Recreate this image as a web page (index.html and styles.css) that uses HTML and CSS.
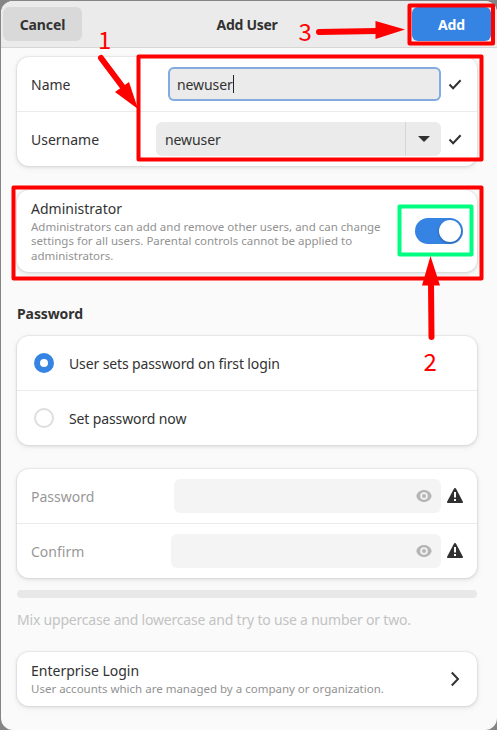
FILE: index.html
```
<!DOCTYPE html>
<html lang="en">
<head>
    <meta charset="utf-8">
    <title>Add User</title>
    <link rel="stylesheet" href="styles.css">
</head>
<body>
    <div class="dialog">
        <header class="header">
            <button class="btn cancel">Cancel</button>
            <span class="title">Add User</span>
            <button class="btn add">Add</button>
        </header>

        <main class="content">
            <section class="card">
                <div class="row">
                    <span class="label">Name</span>
                    <div class="entry name-entry focused"><span>newuser</span><i class="caret"></i></div>
                    <svg class="icon" viewBox="0 0 16 16"><path class="check" d="M2.500 8.500l3.600 3.700 7.500-8"/></svg>
                </div>
                <div class="row">
                    <span class="label">Username</span>
                    <div class="entry user-entry">
                        <span>newuser</span>
                        <span class="drop"><svg class="arrow" viewBox="0 0 12 6"><path d="M0 0h12L6 6z"/></svg></span>
                    </div>
                    <svg class="icon" viewBox="0 0 16 16"><path class="check" d="M2.500 8.500l3.600 3.700 7.500-8"/></svg>
                </div>
            </section>

            <section class="card admin">
                <div class="text">
                    <div class="name">Administrator</div>
                    <div class="desc">
                        <span class="line">Administrators can add and remove other users, and can change</span>
                        <span class="line">settings for all users. Parental controls cannot be applied to</span>
                        <span class="line">administrators.</span>
                    </div>
                </div>
                <div class="switch"><i class="knob"></i></div>
            </section>

            <h2 class="heading">Password</h2>

            <section class="card">
                <div class="row">
                    <i class="radio checked"></i>
                    <span class="option">User sets password on first login</span>
                </div>
                <div class="row">
                    <i class="radio"></i>
                    <span class="option">Set password now</span>
                </div>
            </section>

            <section class="card passwords">
                <div class="row">
                    <span class="label">Password</span>
                    <div class="entry pass-entry disabled">
                        <svg class="icon eye" viewBox="0 0 16 16"><path fill-rule="evenodd" d="M8 2C4 2 1.2 4.400.3 8c.9 3.600 3.700 6 7.700 6s6.800-2.400 7.700-6C14.800 4.400 12 2 8 2zm0 2.200a3.800 3.800 0 1 1 0 7.600 3.800 3.800 0 0 1 0-7.600z"/><circle cx="8" cy="8" r="2"/></svg>
                    </div>
                    <svg class="icon warn" viewBox="0 0 16 16"><path fill-rule="evenodd" d="M8 0c-.5 0-.9.2-1.100.7L.2 13.600c-.4.800.1 1.400.9 1.400h13.800c.8 0 1.300-.6.900-1.400L9.100.7C8.900.2 8.500 0 8 0zM7 4h2v5.500H7zM7 11h2v2H7z"/></svg>
                </div>
                <div class="row">
                    <span class="label">Confirm</span>
                    <div class="entry confirm-entry disabled">
                        <svg class="icon eye" viewBox="0 0 16 16"><path fill-rule="evenodd" d="M8 2C4 2 1.2 4.400.3 8c.9 3.600 3.700 6 7.700 6s6.800-2.400 7.700-6C14.800 4.400 12 2 8 2zm0 2.200a3.800 3.800 0 1 1 0 7.600 3.800 3.800 0 0 1 0-7.600z"/><circle cx="8" cy="8" r="2"/></svg>
                    </div>
                    <svg class="icon warn" viewBox="0 0 16 16"><path fill-rule="evenodd" d="M8 0c-.5 0-.9.2-1.100.7L.2 13.600c-.4.800.1 1.400.9 1.400h13.800c.8 0 1.300-.6.900-1.400L9.100.7C8.900.2 8.500 0 8 0zM7 4h2v5.500H7zM7 11h2v2H7z"/></svg>
                </div>
            </section>

            <div class="level"></div>
            <p class="hint">Mix uppercase and lowercase and try to use a number or two.</p>

            <section class="card login">
                <div class="text">
                    <div class="name">Enterprise Login</div>
                    <div class="desc"><span class="line">User accounts which are managed by a company or organization.</span></div>
                </div>
                <svg class="icon" viewBox="0 0 16 16"><path class="chevron" d="M4.800 1.500L11 8l-6.200 6.500"/></svg>
            </section>
        </main>
    </div>

    <!-- numbered steps over the dialog -->
    <svg class="marks" viewBox="0 0 497 730">
        <g class="box">
            <rect x="138.500" y="56.500" width="343" height="103"/>
            <rect x="13.500" y="187.500" width="468" height="91"/>
            <rect x="409.500" y="5.500" width="83.500" height="38"/>
            <rect class="green" x="399.500" y="206.500" width="72" height="48"/>
        </g>
        <g class="shaft">
            <path d="M101 58l24 32"/>
            <path d="M319 32l58-1"/>
            <path d="M431.500 337l-.5-54"/>
        </g>
        <path class="tip" d="M138 109l-23-17 14-10z"/>
        <path class="tip" d="M405 29.500l-29.500 9.500v-18z"/>
        <path class="tip" d="M430.500 256l9.500 29.500h-18z"/>
        <text x="98" y="49">1</text>
        <text x="423.500" y="371">2</text>
        <text x="298.500" y="41">3</text>
    </svg>
</body>
</html>
```

FILE: styles.css
```
* {
    box-sizing: border-box;
}

body {
    margin: 0;
    width: 497px;
    height: 730px;
    padding: 1px 0 0 1px;
    overflow: hidden;
    background: #858585;
    font-family: "Noto Sans", sans-serif;
    font-size: 14px;
    color: #323232;
}

.dialog {
    height: 729px;
    background: #fafafa;
    border-radius: 12px;
    overflow: hidden;
}

.header {
    display: flex;
    justify-content: space-between;
    align-items: center;
    height: 47px;
    padding: 0 6px 0 2px;
    background: #ebebeb;
    border-bottom: 1px solid #d6d6d6;
}

.btn {
    width: 79px;
    height: 34px;
    padding: 0;
    border: none;
    border-radius: 6px;
    background: #d9d9d9;
    color: #323232;
    font: bold 14px "Noto Sans", sans-serif;
    letter-spacing: -0.1px;
}

.btn.add {
    background: #3584e4;
    color: #fff;
}

.title {
    font-weight: bold;
    letter-spacing: -0.3px;
}

.content {
    padding: 9px 20px 0 16px;
}

.card {
    background: #fff;
    border-radius: 12px;
    box-shadow: 0 0 0 1px rgba(0,0,0,0.04), 0 1px 3px 1px rgba(0,0,0,0.07), 0 2px 6px 2px rgba(0,0,0,0.03);
}

.row {
    display: flex;
    align-items: center;
    height: 54px;
    padding: 0 14px;
}

.row + .row {
    height: 55px;
    border-top: 1px solid #ebebeb;
}

.label {
    flex: none;
}

.entry {
    display: flex;
    align-items: center;
    flex: none;
    height: 34px;
    margin-left: auto;
    margin-right: 6px;
    padding-left: 9px;
    border-radius: 6px;
    background: #ebebeb;
}

.name-entry {
    width: 273px;
}

.user-entry {
    width: 285px;
}

.pass-entry {
    width: 267px;
}

.confirm-entry {
    width: 270px;
}

.focused {
    box-shadow: inset 0 0 0 2px #81abe1;
}

.caret {
    width: 1px;
    height: 18px;
    background: #222;
}

.entry span {
    letter-spacing: -0.1px;
}

.drop {
    display: flex;
    align-items: center;
    justify-content: center;
    width: 36px;
    height: 34px;
    margin-left: auto;
    border-left: 1px solid #d6d6d6;
}

.arrow {
    width: 12px;
    height: 6px;
    fill: #303030;
}

.disabled {
    justify-content: flex-end;
    padding-right: 9px;
    background: #f4f4f4;
}

.icon {
    flex: none;
    width: 16px;
    height: 16px;
}

.check,
.chevron {
    fill: none;
    stroke: #323232;
    stroke-width: 2;
}

.eye {
    fill: #b5b5b5;
}

.warn {
    fill: #303030;
}

.admin,
.login {
    display: flex;
    align-items: center;
    justify-content: space-between;
    padding: 0 14px;
}

.admin {
    height: 82px;
    margin-top: 24px;
}

.name {
    margin-bottom: 2px;
    line-height: 19px;
}

.desc {
    font-size: 11.5px;
    line-height: 14.5px;
    color: #929292;
}

.line {
    display: block;
    white-space: nowrap;
}

.switch {
    display: flex;
    justify-content: flex-end;
    width: 48px;
    height: 26px;
    padding: 2px;
    border-radius: 13px;
    background: #3584e4;
}

.knob {
    width: 22px;
    height: 22px;
    border-radius: 50%;
    background: #fff;
    box-shadow: 0 1px 3px rgba(0,0,0,0.3);
}

.heading {
    height: 20px;
    margin: 32px 0 12px;
    font-size: 14px;
    line-height: 20px;
    letter-spacing: -0.1px;
}

.radio {
    width: 20px;
    height: 20px;
    margin: 0 15px 0 3px;
    border: 2px solid #dedede;
    border-radius: 50%;
}

.radio.checked {
    border: 6px solid #3584e4;
}

.option {
    letter-spacing: -0.12px;
}

.passwords {
    margin-top: 24px;
    color: #989898;
}

.level {
    height: 8px;
    margin-top: 12px;
    border-radius: 4px;
    background: #e8e8e8;
}

.hint {
    height: 20px;
    margin: 12px 0 22px;
    line-height: 20px;
    letter-spacing: -0.2px;
    color: #c3c3c3;
}

.login {
    height: 54px;
}

.marks {
    position: absolute;
    top: 0;
    left: 0;
    width: 497px;
    height: 730px;
}

.box rect {
    fill: none;
    stroke: #f00;
    stroke-width: 4;
    stroke-linejoin: round;
}

.box .green {
    stroke: #00ff80;
}

.shaft {
    fill: none;
    stroke: #f00;
    stroke-width: 6;
    stroke-linecap: round;
}

.tip,
.marks text {
    fill: #f00;
}

.marks text {
    font-family: "Noto Sans CJK SC", sans-serif;
    font-size: 24px;
}
```
